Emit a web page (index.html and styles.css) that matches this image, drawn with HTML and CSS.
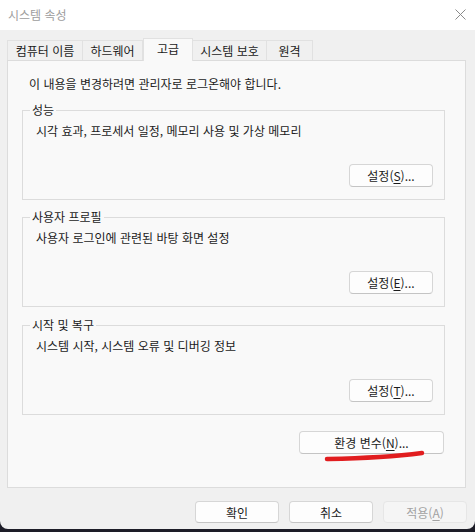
FILE: index.html
```html
<!DOCTYPE html>
<html lang="ko">
<head>
<meta charset="utf-8">
<title>시스템 속성</title>
<link rel="stylesheet" href="styles.css">
</head>
<body>
<div class="window">
  <div class="titlebar">
    <span class="title">시스템 속성</span>
    <svg class="close" width="11" height="11" viewBox="0 0 11 11"><path d="M0.5 0.5 L10.5 10.5 M10.5 0.5 L0.5 10.5" stroke="#8a8a8a" stroke-width="1" fill="none"/></svg>
  </div>
  <div class="content">
    <div class="tabs">
      <div class="tab t1">컴퓨터 이름</div>
      <div class="tab t2">하드웨어</div>
      <div class="tab t3 active">고급</div>
      <div class="tab t4">시스템 보호</div>
      <div class="tab t5">원격</div>
    </div>
    <div class="panel">
      <p class="notice">이 내용을 변경하려면 관리자로 로그온해야 합니다.</p>
      <div class="group g1">
        <span class="group-title">성능</span>
        <p class="desc">시각 효과, 프로세서 일정, 메모리 사용 및 가상 메모리</p>
        <button class="btn">설정(<u>S</u>)...</button>
      </div>
      <div class="group g2">
        <span class="group-title">사용자 프로필</span>
        <p class="desc">사용자 로그인에 관련된 바탕 화면 설정</p>
        <button class="btn">설정(<u>E</u>)...</button>
      </div>
      <div class="group g3">
        <span class="group-title">시작 및 복구</span>
        <p class="desc">시스템 시작, 시스템 오류 및 디버깅 정보</p>
        <button class="btn">설정(<u>T</u>)...</button>
      </div>
      <div class="env-row">
        <div class="env-wrap">
          <button class="btn env">환경 변수(<u>N</u>)...</button>
          <svg class="mark" width="104" height="14" viewBox="0 0 104 14"><path d="M4 10 C 30 9.5, 60 9, 99 4" stroke="#e11d1f" stroke-width="4.5" stroke-linecap="round" fill="none"/></svg>
        </div>
      </div>
    </div>
    <div class="footer">
      <button class="btn">확인</button>
      <button class="btn">취소</button>
      <button class="btn disabled">적용(<u>A</u>)</button>
    </div>
  </div>
</div>
</body>
</html>
```
FILE: styles.css
```css
* { box-sizing: border-box; }
html, body { margin: 0; padding: 0; }
body {
  width: 475px;
  height: 532px;
  background: #1d1d28;
  font-family: "Noto Sans CJK KR", "Noto Sans", sans-serif;
  font-size: 12px;
  color: #1b1b1b;
  overflow: hidden;
}
.window {
  width: 475px;
  height: 529px;
  background: #f0f0f0;
  border-radius: 0 0 8px 8px;
  display: flex;
  flex-direction: column;
  overflow: hidden;
}
.titlebar {
  height: 30px;
  background: #ffffff;
  display: flex;
  align-items: center;
  justify-content: space-between;
  padding: 0 9px 1px 8px;
}
.title {
  color: #9d9d9d;
  font-size: 12px;
  line-height: 16px;
}
.close { display: block; margin-top: -1px; }
.content {
  padding: 8px 9px 0 7px;
  display: flex;
  flex-direction: column;
}
.tabs {
  display: flex;
  align-items: flex-end;
  height: 22px;
  position: relative;
  z-index: 1;
}
.tab {
  height: 20px;
  border: 1px solid #e1e1e1;
  border-bottom: none;
  background: #f0f0f0;
  line-height: 19px;
  text-align: center;
  white-space: nowrap;
}
.tab + .tab { border-left: none; }
.t1 { width: 76px; }
.t2 { width: 60px; }
.t3 { width: 50px; }
.t4 { width: 74px; }
.t5 { width: 46px; }
.tab.active {
  height: 23px;
  margin-bottom: -1px;
  background: #f9f9f9;
  border: 1px solid #e1e1e1;
  border-bottom: none;
  line-height: 19px;
}
.panel {
  height: 428px;
  background: #f9f9f9;
  border: 1px solid #dcdcdc;
  padding: 15px 20px 0 14px;
  display: flex;
  flex-direction: column;
}
.notice {
  margin: 0 0 0 7px;
  line-height: 16px;
}
.group {
  border: 1px solid #dcdcdc;
  padding: 0 11px 12px 13px;
  display: flex;
  flex-direction: column;
}
.g1 { margin-top: 18px; }
.g2 { margin-top: 17px; }
.g3 { margin-top: 18px; }
.group-title {
  align-self: flex-start;
  margin: -9px 0 0 -6px;
  padding: 0 2px;
  background: #f9f9f9;
  line-height: 16px;
}
.desc {
  margin: 5px 0 0 0;
  line-height: 16px;
}
.group .btn {
  align-self: flex-end;
  margin-top: 25px;
}
.btn {
  width: 84px;
  height: 23px;
  padding: 0;
  font-family: inherit;
  font-size: 12px;
  color: #1b1b1b;
  line-height: 20px;
  background: #fdfdfd;
  border: 1px solid #d6d6d6;
  border-bottom-color: #c4c4c4;
  border-radius: 4px;
  text-align: center;
}
.btn u { text-underline-offset: 2px; }
.env-row {
  display: flex;
  justify-content: flex-end;
  margin-top: 16px;
  padding-right: 1px;
}
.env-wrap { position: relative; }
.btn.env { width: 145px; }
.mark {
  position: absolute;
  left: 24px;
  top: 18px;
}
.footer {
  display: flex;
  justify-content: flex-end;
  gap: 10px;
  margin-top: 13px;
  margin-right: -1px;
}
.footer .btn { height: 22px; line-height: 19px; }
.btn.disabled {
  background: #f5f5f5;
  border-color: #e6e6e6;
  color: #a2a2a2;
}
```
